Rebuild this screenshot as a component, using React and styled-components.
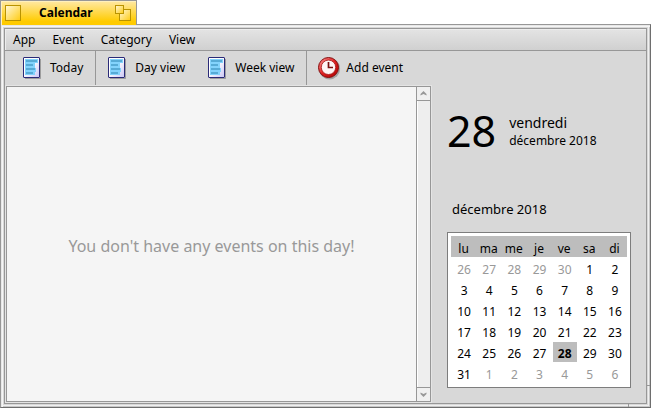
import React, { useState } from 'react';
import styled, { createGlobalStyle } from 'styled-components';

const GlobalStyle = createGlobalStyle`
  * {
    box-sizing: border-box;
  }

  body {
    margin: 0;
    background: #ffffff;
    color: #000000;
    font-family: 'Noto Sans', sans-serif;
    font-size: 12px;
    line-height: 16px;
  }

  button {
    font: inherit;
    color: inherit;
    background: none;
    border: none;
    margin: 0;
    padding: 0;
  }
`;

const Window = styled.div`
  display: flex;
  flex-direction: column;
  min-height: 100vh;
`;

const TitleTab = styled.header`
  display: flex;
  align-items: center;
  align-self: flex-start;
  gap: 18px;
  height: 25px;
  margin-bottom: -1px;
  padding: 0 5px 0 4px;
  border: 1px solid #979797;
  border-bottom: none;
  background: linear-gradient(#ffe9a4, #ffcb00 85%);
  box-shadow: inset 1px 1px 0 #fff0bd;
  z-index: 1;
`;

const Title = styled.h1`
  margin: 0;
  padding-right: 4px;
  font-size: 12px;
  font-weight: bold;
`;

const TitleButton = styled.button`
  display: flex;
`;

const Frame = styled.div`
  position: relative;
  display: flex;
  flex: 1;
  padding: 3px;
  border: 1px solid #979797;
  border-right-color: #6e6e6e;
  border-bottom-color: #6e6e6e;
  background: #d8d8d8;
  box-shadow: inset 1px 1px 0 #e8e8e8, inset 2px 2px 0 #f5f5f5,
    inset -1px -1px 0 #c8c8c8, inset -2px -2px 0 #f0f0f0;
`;

const ResizeMark = styled.span`
  position: absolute;
  background: #979797;
  ${props => props.$side === 'right'
    ? 'right: 0; bottom: 21px; width: 3px; height: 1px;'
    : 'bottom: 0; right: 21px; width: 1px; height: 3px;'}
`;

const Content = styled.div`
  display: flex;
  flex: 1;
  flex-direction: column;
  border: 1px solid #979797;
  background: #d8d8d8;
`;

const MenuBar = styled.nav`
  display: flex;
  height: 22px;
  padding-left: 8px;
  gap: 17px;
  border-bottom: 1px solid #979797;
  background: linear-gradient(#e4e4e4, #d0d0d0);
  box-shadow: inset 1px 1px 0 #ededed;
`;

const MenuItem = styled.button`
  padding-top: 1px;
`;

const ToolBar = styled.div`
  display: flex;
  height: 34px;
  padding-left: 6px;
`;

const ToolGroup = styled.div`
  display: flex;
  gap: 17px;
  padding: 0 12px 0 6px;

  &:not(:last-child) {
    border-right: 1px solid #979797;
  }
`;

const ToolButton = styled.button`
  display: flex;
  align-items: center;
  gap: 5px;
  padding-left: 4px;
`;

const Main = styled.main`
  display: flex;
  flex: 1;
`;

const EventView = styled.section`
  display: flex;
  flex: 1;
  border: 1px solid #979797;
  outline: 1px solid #e4e4e4;
  margin: 1px;
  background: #f5f5f5;
`;

const EmptyMessage = styled.p`
  flex: 1;
  align-self: center;
  margin: 0;
  padding-top: 4px;
  color: #999999;
  font-size: 16px;
  line-height: 22px;
  text-align: center;
`;

const ScrollBar = styled.div`
  display: flex;
  flex-direction: column;
  justify-content: space-between;
  width: 14px;
  border-left: 1px solid #979797;
  background: #eeeeee;
  box-shadow: inset 1px 0 0 #ffffff;
`;

const ScrollButton = styled.button`
  display: flex;
  align-items: center;
  justify-content: center;
  height: 14px;
  background: #f0f0f0;
  border-${props => (props.$down ? 'top' : 'bottom')}: 1px solid #979797;
`;

const SidePanel = styled.aside`
  flex: none;
  padding: 20px 15px 14px;
`;

const Today = styled.div`
  display: flex;
  align-items: center;
  gap: 13px;
`;

const DayNumber = styled.div`
  font-size: 43px;
  line-height: 52px;
`;

const WeekDay = styled.div`
  font-size: 14px;
  line-height: 19px;
`;

const MonthLabel = styled.div`
  line-height: 18px;
`;

const CalendarTable = styled.table`
  width: 184px;
  padding: 3px 3px 4px;
  border: 1px solid #7d7d7d;
  border-spacing: 0;
  background: #ffffff;
  table-layout: fixed;

  thead {
    background: #bdbdbd;
  }
`;

const CalendarCaption = styled.caption`
  padding: 43px 0 14px 5px;
  font-size: 13px;
  line-height: 18px;
  text-align: left;
`;

const HeadCell = styled.th`
  height: 21px;
  padding: 4px 0 0;
  font-weight: normal;
`;

const DayCell = styled.td`
  height: 21px;
  padding: 4px 0 0;
  border: solid transparent;
  border-width: 1px 0 0 1px;
  background: ${props => (props.$selected ? '#bdbdbd' : 'none')};
  background-clip: padding-box;
  color: ${props => (props.$muted ? '#999999' : '#000000')};
  font-weight: ${props => (props.$selected ? 'bold' : 'normal')};
  text-align: center;
`;

const DayButton = styled.button`
  display: block;
  width: 100%;
`;

const CloseIcon = () => (
  <svg width="16" height="16" viewBox="0 0 16 16">
    <defs>
      <linearGradient id="gold" x2="1" y2="1">
        <stop offset="0" stopColor="#fff8dc" />
        <stop offset="1" stopColor="#ffcb10" />
      </linearGradient>
    </defs>
    <rect x="0.5" y="0.5" width="15" height="15" fill="url(#gold)" stroke="#b99300" />
  </svg>
);

const ZoomIcon = () => (
  <svg width="16" height="16" viewBox="0 0 16 16">
    <rect x="4.5" y="4.5" width="11" height="11" fill="url(#gold)" stroke="#b99300" />
    <rect x="0.5" y="0.5" width="8" height="8" fill="url(#gold)" stroke="#b99300" />
  </svg>
);

const SheetIcon = () => (
  <svg width="24" height="24" viewBox="0 0 24 24">
    <defs>
      <linearGradient id="paper" x2="1" y2="1">
        <stop offset="0.4" stopColor="#ffffff" />
        <stop offset="1" stopColor="#c9c5f5" />
      </linearGradient>
    </defs>
    <path d="M4 22.5H19.5V3" fill="none" stroke="#777777" opacity="0.6" />
    <rect x="2.5" y="1.5" width="16" height="20" rx="0.5" fill="url(#paper)" stroke="#2b2b78" />
    <path d="M4 3H17V7H14V12H15V16H14V19H4Z" fill="#83d3fc" />
    <path d="M5 5H16M5 9H12M5 13H14M5 17H12" stroke="#4a9fc9" strokeWidth="1.6" />
  </svg>
);

const ClockIcon = () => (
  <svg width="24" height="24" viewBox="0 0 24 24">
    <defs>
      <linearGradient id="red" x2="1" y2="1">
        <stop offset="0" stopColor="#ff9a9a" />
        <stop offset="0.5" stopColor="#df2020" />
        <stop offset="1" stopColor="#a90000" />
      </linearGradient>
    </defs>
    <circle cx="12.5" cy="12.8" r="10.6" fill="#777777" opacity="0.55" />
    <circle cx="11.5" cy="11.5" r="10" fill="url(#red)" stroke="#850c0c" />
    <circle cx="11.5" cy="11.3" r="7.2" fill="#fff4f4" stroke="#a31616" strokeWidth="0.8" />
    <path d="M11.5 6V11.5H16" fill="none" stroke="#7a1010" strokeWidth="1.7" />
  </svg>
);

const ArrowIcon = ({ down }) => (
  <svg width="7" height="5" viewBox="0 0 7 5">
    <path
      d={down ? 'M0.5 0.5V2L3.5 5L6.5 2V0.5L3.5 2Z' : 'M0.5 4.5V3L3.5 0L6.5 3V4.5L3.5 3Z'}
      fill="#989898"
    />
  </svg>
);

const menus = ['App', 'Event', 'Category', 'View'];
const weekDays = ['lu', 'ma', 'me', 'je', 've', 'sa', 'di'];

// 26 November is the first Monday shown
const weeks = Array.from({ length: 6 }, (_, week) =>
  Array.from({ length: 7 }, (_, day) => {
    const offset = week * 7 + day - 4;
    if (offset < 1) return { day: 30 + offset, muted: true };
    if (offset > 31) return { day: offset - 31, muted: true };
    return { day: offset, muted: false };
  })
);

function Calendar({ selected, onSelect }) {
  return (
    <CalendarTable>
      <CalendarCaption>décembre 2018</CalendarCaption>
      <thead>
        <tr>
          {weekDays.map(name => (
            <HeadCell key={name} scope="col">{name}</HeadCell>
          ))}
        </tr>
      </thead>
      <tbody>
        {weeks.map((week, index) => (
          <tr key={index}>
            {week.map(({ day, muted }) => (
              <DayCell key={day} $muted={muted} $selected={!muted && day === selected}>
                <DayButton disabled={muted} onClick={() => onSelect(day)}>{day}</DayButton>
              </DayCell>
            ))}
          </tr>
        ))}
      </tbody>
    </CalendarTable>
  );
}

function App() {
  const [selected, setSelected] = useState(28);
  const names = ['lundi', 'mardi', 'mercredi', 'jeudi', 'vendredi', 'samedi', 'dimanche'];

  return (
    <Window>
      <GlobalStyle />
      <TitleTab>
        <TitleButton aria-label="Close"><CloseIcon /></TitleButton>
        <Title>Calendar</Title>
        <TitleButton aria-label="Zoom"><ZoomIcon /></TitleButton>
      </TitleTab>
      <Frame>
        <Content>
          <MenuBar>
            {menus.map(menu => (
              <MenuItem key={menu}>{menu}</MenuItem>
            ))}
          </MenuBar>
          <ToolBar>
            <ToolGroup>
              <ToolButton onClick={() => setSelected(28)}><SheetIcon />Today</ToolButton>
            </ToolGroup>
            <ToolGroup>
              <ToolButton><SheetIcon />Day view</ToolButton>
              <ToolButton><SheetIcon />Week view</ToolButton>
            </ToolGroup>
            <ToolGroup>
              <ToolButton><ClockIcon />Add event</ToolButton>
            </ToolGroup>
          </ToolBar>
          <Main>
            <EventView>
              <EmptyMessage>You don't have any events on this day!</EmptyMessage>
              <ScrollBar>
                <ScrollButton aria-label="Scroll up"><ArrowIcon /></ScrollButton>
                <ScrollButton $down aria-label="Scroll down"><ArrowIcon down /></ScrollButton>
              </ScrollBar>
            </EventView>
            <SidePanel>
              <Today>
                <DayNumber>{selected}</DayNumber>
                <div>
                  <WeekDay>{names[(selected + 4) % 7]}</WeekDay>
                  <MonthLabel>décembre 2018</MonthLabel>
                </div>
              </Today>
              <Calendar selected={selected} onSelect={setSelected} />
            </SidePanel>
          </Main>
        </Content>
        <ResizeMark $side="right" />
        <ResizeMark $side="bottom" />
      </Frame>
    </Window>
  );
}

export default App;
